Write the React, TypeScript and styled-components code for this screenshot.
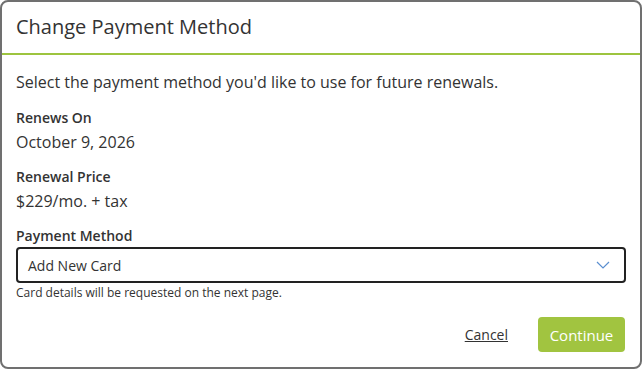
import React from 'react';
import styled, { createGlobalStyle } from 'styled-components';

const GlobalStyle = createGlobalStyle`
  html, body {
    margin: 0;
    padding: 0;
    background: #ffffff;
  }
  body {
    font-family: "Open Sans", "Noto Sans", sans-serif;
    color: #333333;
  }
  * {
    box-sizing: border-box;
  }
`;

const Dialog = styled.div`
  width: 642px;
  height: 369px;
  border: 2px solid #707070;
  border-radius: 8px;
  background: #ffffff;
  display: flex;
  flex-direction: column;
  overflow: hidden;
`;

const Header = styled.div`
  height: 53px;
  padding: 0 14px;
  display: flex;
  align-items: center;
  border-bottom: 2px solid #9dc43f;
`;

const Title = styled.h1`
  margin: 0;
  font-size: 20px;
  font-weight: 400;
  color: #333333;
  line-height: 28px;
  padding-bottom: 2px;
`;

const Body = styled.div`
  flex: 1;
  display: flex;
  flex-direction: column;
  padding: 16px 14px 15px;
`;

const Intro = styled.p`
  margin: 0 0 15px;
  font-size: 16px;
  line-height: 22px;
`;

const Field = styled.div`
  display: flex;
  flex-direction: column;
  gap: 3px;
  margin-bottom: 14px;
`;

const Label = styled.span`
  font-size: 14px;
  font-weight: 600;
  line-height: 20px;
`;

const Value = styled.span`
  font-size: 16px;
  line-height: 22px;
`;

const SelectBox = styled.div`
  margin-top: 1px;
  height: 36px;
  border: 2px solid #222222;
  border-radius: 4px;
  display: flex;
  align-items: center;
  justify-content: space-between;
  padding: 0 14px 0 10px;
  font-size: 14px;
  color: #333333;
`;

const Help = styled.span`
  font-size: 12px;
  line-height: 17px;
  margin-top: 1px;
`;

const Footer = styled.div`
  margin-top: auto;
  display: flex;
  justify-content: flex-end;
  align-items: center;
  gap: 30px;
  padding-right: 1px;
`;

const LinkButton = styled.a`
  font-size: 14px;
  color: #333333;
  text-decoration: underline;
  cursor: pointer;
`;

const PrimaryButton = styled.button`
  height: 35px;
  width: 87px;
  border: none;
  border-radius: 4px;
  background: #a1c440;
  color: #ffffff;
  font-family: inherit;
  font-size: 15px;
  cursor: pointer;
`;

export default function App(): JSX.Element {
  return (
    <>
      <GlobalStyle />
      <Dialog>
        <Header>
          <Title>Change Payment Method</Title>
        </Header>
        <Body>
          <Intro>Select the payment method you'd like to use for future renewals.</Intro>
          <Field>
            <Label>Renews On</Label>
            <Value>October 9, 2026</Value>
          </Field>
          <Field>
            <Label>Renewal Price</Label>
            <Value>$229/mo. + tax</Value>
          </Field>
          <Label>Payment Method</Label>
          <SelectBox>
            <span>Add New Card</span>
            <svg width="14" height="8" viewBox="0 0 14 8" fill="none">
              <path d="M1 1l6 6 6-6" stroke="#5b8fd0" strokeWidth="1.2" />
            </svg>
          </SelectBox>
          <Help>Card details will be requested on the next page.</Help>
          <Footer>
            <LinkButton>Cancel</LinkButton>
            <PrimaryButton>Continue</PrimaryButton>
          </Footer>
        </Body>
      </Dialog>
    </>
  );
}
